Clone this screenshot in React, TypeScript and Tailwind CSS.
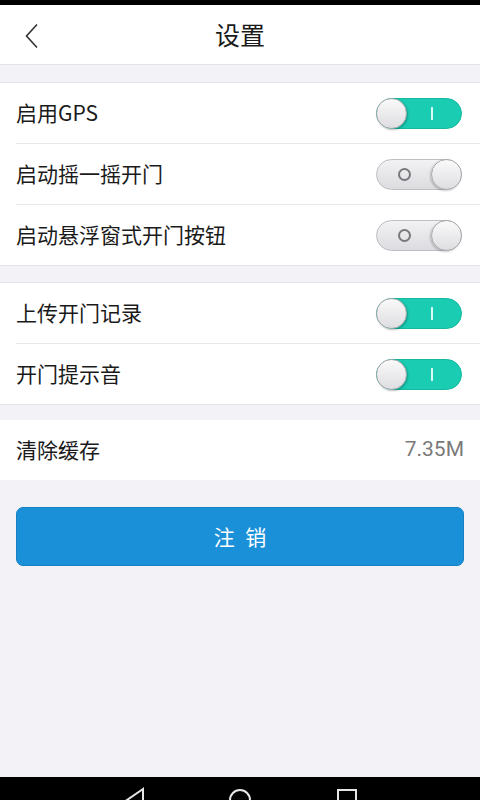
import React, { useState } from 'react';

const font = { fontFamily: '"Noto Sans CJK SC", Roboto, "Noto Sans", sans-serif' };

const Toggle = ({ on, onClick }: { on: boolean; onClick: () => void }) => (
  <button
    onClick={onClick}
    className={`relative w-[86px] h-[31px] rounded-full border flex items-center shrink-0 ${
      on ? 'bg-[#19ccb2] border-[#14b89f]' : 'bg-gradient-to-b from-[#f2f2f4] to-[#dcdce0] border-[#bdbdc2]'
    }`}
  >
    {on ? (
      <>
        <span className="absolute left-[-1px] top-[-1px] w-[31px] h-[31px] rounded-full bg-gradient-to-b from-[#fafafa] to-[#dedee2] border border-[#a9a9ae] shadow-[1px_1px_2px_rgba(0,0,0,0.25)]" />
        <span className="absolute left-[54px] top-[8px] w-[2px] h-[13px] bg-[#d6fbf5]" />
      </>
    ) : (
      <>
        <span className="absolute left-[21px] top-[8px] w-[13px] h-[13px] rounded-full border-2 border-[#77777c]" />
        <span className="absolute right-[-1px] top-[-1px] w-[31px] h-[31px] rounded-full bg-gradient-to-b from-[#fafafa] to-[#dedee2] border border-[#a9a9ae] shadow-[-1px_1px_2px_rgba(0,0,0,0.2)]" />
      </>
    )}
  </button>
);

const Row = ({ label, last, children }: { label: string; last?: boolean; children: React.ReactNode }) => (
  <div className="pl-4">
    <div
      className={`flex items-center justify-between pr-[18px] ${
        last ? 'h-[60px]' : 'h-[61px] border-b border-[#e8e8ec]'
      }`}
    >
      <span className="text-[21px] text-[#1a1a1a]">{label}</span>
      {children}
    </div>
  </div>
);

export default function App() {
  const [gps, setGps] = useState(true);
  const [shake, setShake] = useState(false);
  const [floatBtn, setFloatBtn] = useState(false);
  const [upload, setUpload] = useState(true);
  const [sound, setSound] = useState(true);

  return (
    <div className="w-[480px] h-[800px] flex flex-col bg-[#f3f3f7] overflow-hidden" style={font}>
      {/* status bar */}
      <div className="h-[5px] bg-black shrink-0" />

      {/* header */}
      <div className="h-[60px] bg-white border-b border-[#e4e4e8] flex items-center relative shrink-0">
        <svg className="absolute left-[24px] top-[18px]" width="16" height="26" viewBox="0 0 16 26">
          <path d="M13 1.5 L2.5 13 L13 24.5" fill="none" stroke="#333" strokeWidth="1.6" />
        </svg>
        <div className="flex-1 text-center text-[25px] text-[#1a1a1a]">设置</div>
      </div>

      <div className="h-[17px] shrink-0" />

      {/* section 1 */}
      <div className="bg-white border-y border-[#e4e4e8]">
        <Row label="启用GPS">
          <Toggle on={gps} onClick={() => setGps(!gps)} />
        </Row>
        <Row label="启动摇一摇开门">
          <Toggle on={shake} onClick={() => setShake(!shake)} />
        </Row>
        <Row label="启动悬浮窗式开门按钮" last>
          <Toggle on={floatBtn} onClick={() => setFloatBtn(!floatBtn)} />
        </Row>
      </div>

      <div className="h-[16px] shrink-0" />

      {/* section 2 */}
      <div className="bg-white border-y border-[#e4e4e8]">
        <Row label="上传开门记录">
          <Toggle on={upload} onClick={() => setUpload(!upload)} />
        </Row>
        <Row label="开门提示音" last>
          <Toggle on={sound} onClick={() => setSound(!sound)} />
        </Row>
      </div>

      <div className="h-[15px] shrink-0" />

      {/* cache */}
      <div className="bg-white h-[60px] flex items-center justify-between pl-4 pr-4">
        <span className="text-[21px] text-[#1a1a1a]">清除缓存</span>
        <span className="text-[21px] text-[#7a7a7a]" style={{ fontFamily: 'Roboto, sans-serif' }}>7.35M</span>
      </div>

      {/* logout */}
      <div className="px-4 pt-[27px]">
        <button className="w-full h-[59px] rounded-[7px] bg-[#1a90d8] border border-[#1682c6] text-white text-[21px] tracking-[0.5em] pl-[0.5em]">
          注销
        </button>
      </div>

      <div className="flex-1" />

      {/* nav bar */}
      <div className="h-[23px] bg-black shrink-0 relative overflow-hidden">
        <svg className="absolute left-[124px] top-[10px]" width="22" height="26" viewBox="0 0 22 26">
          <path d="M19 2 L3 13 L19 24 Z" fill="none" stroke="#e6e6e6" strokeWidth="2" />
        </svg>
        <svg className="absolute left-[228px] top-[11px]" width="24" height="24" viewBox="0 0 24 24">
          <circle cx="12" cy="12" r="10" fill="none" stroke="#e6e6e6" strokeWidth="2" />
        </svg>
        <svg className="absolute left-[336px] top-[11px]" width="22" height="22" viewBox="0 0 22 22">
          <rect x="2" y="2" width="18" height="18" fill="none" stroke="#e6e6e6" strokeWidth="2" />
        </svg>
      </div>
    </div>
  );
}
